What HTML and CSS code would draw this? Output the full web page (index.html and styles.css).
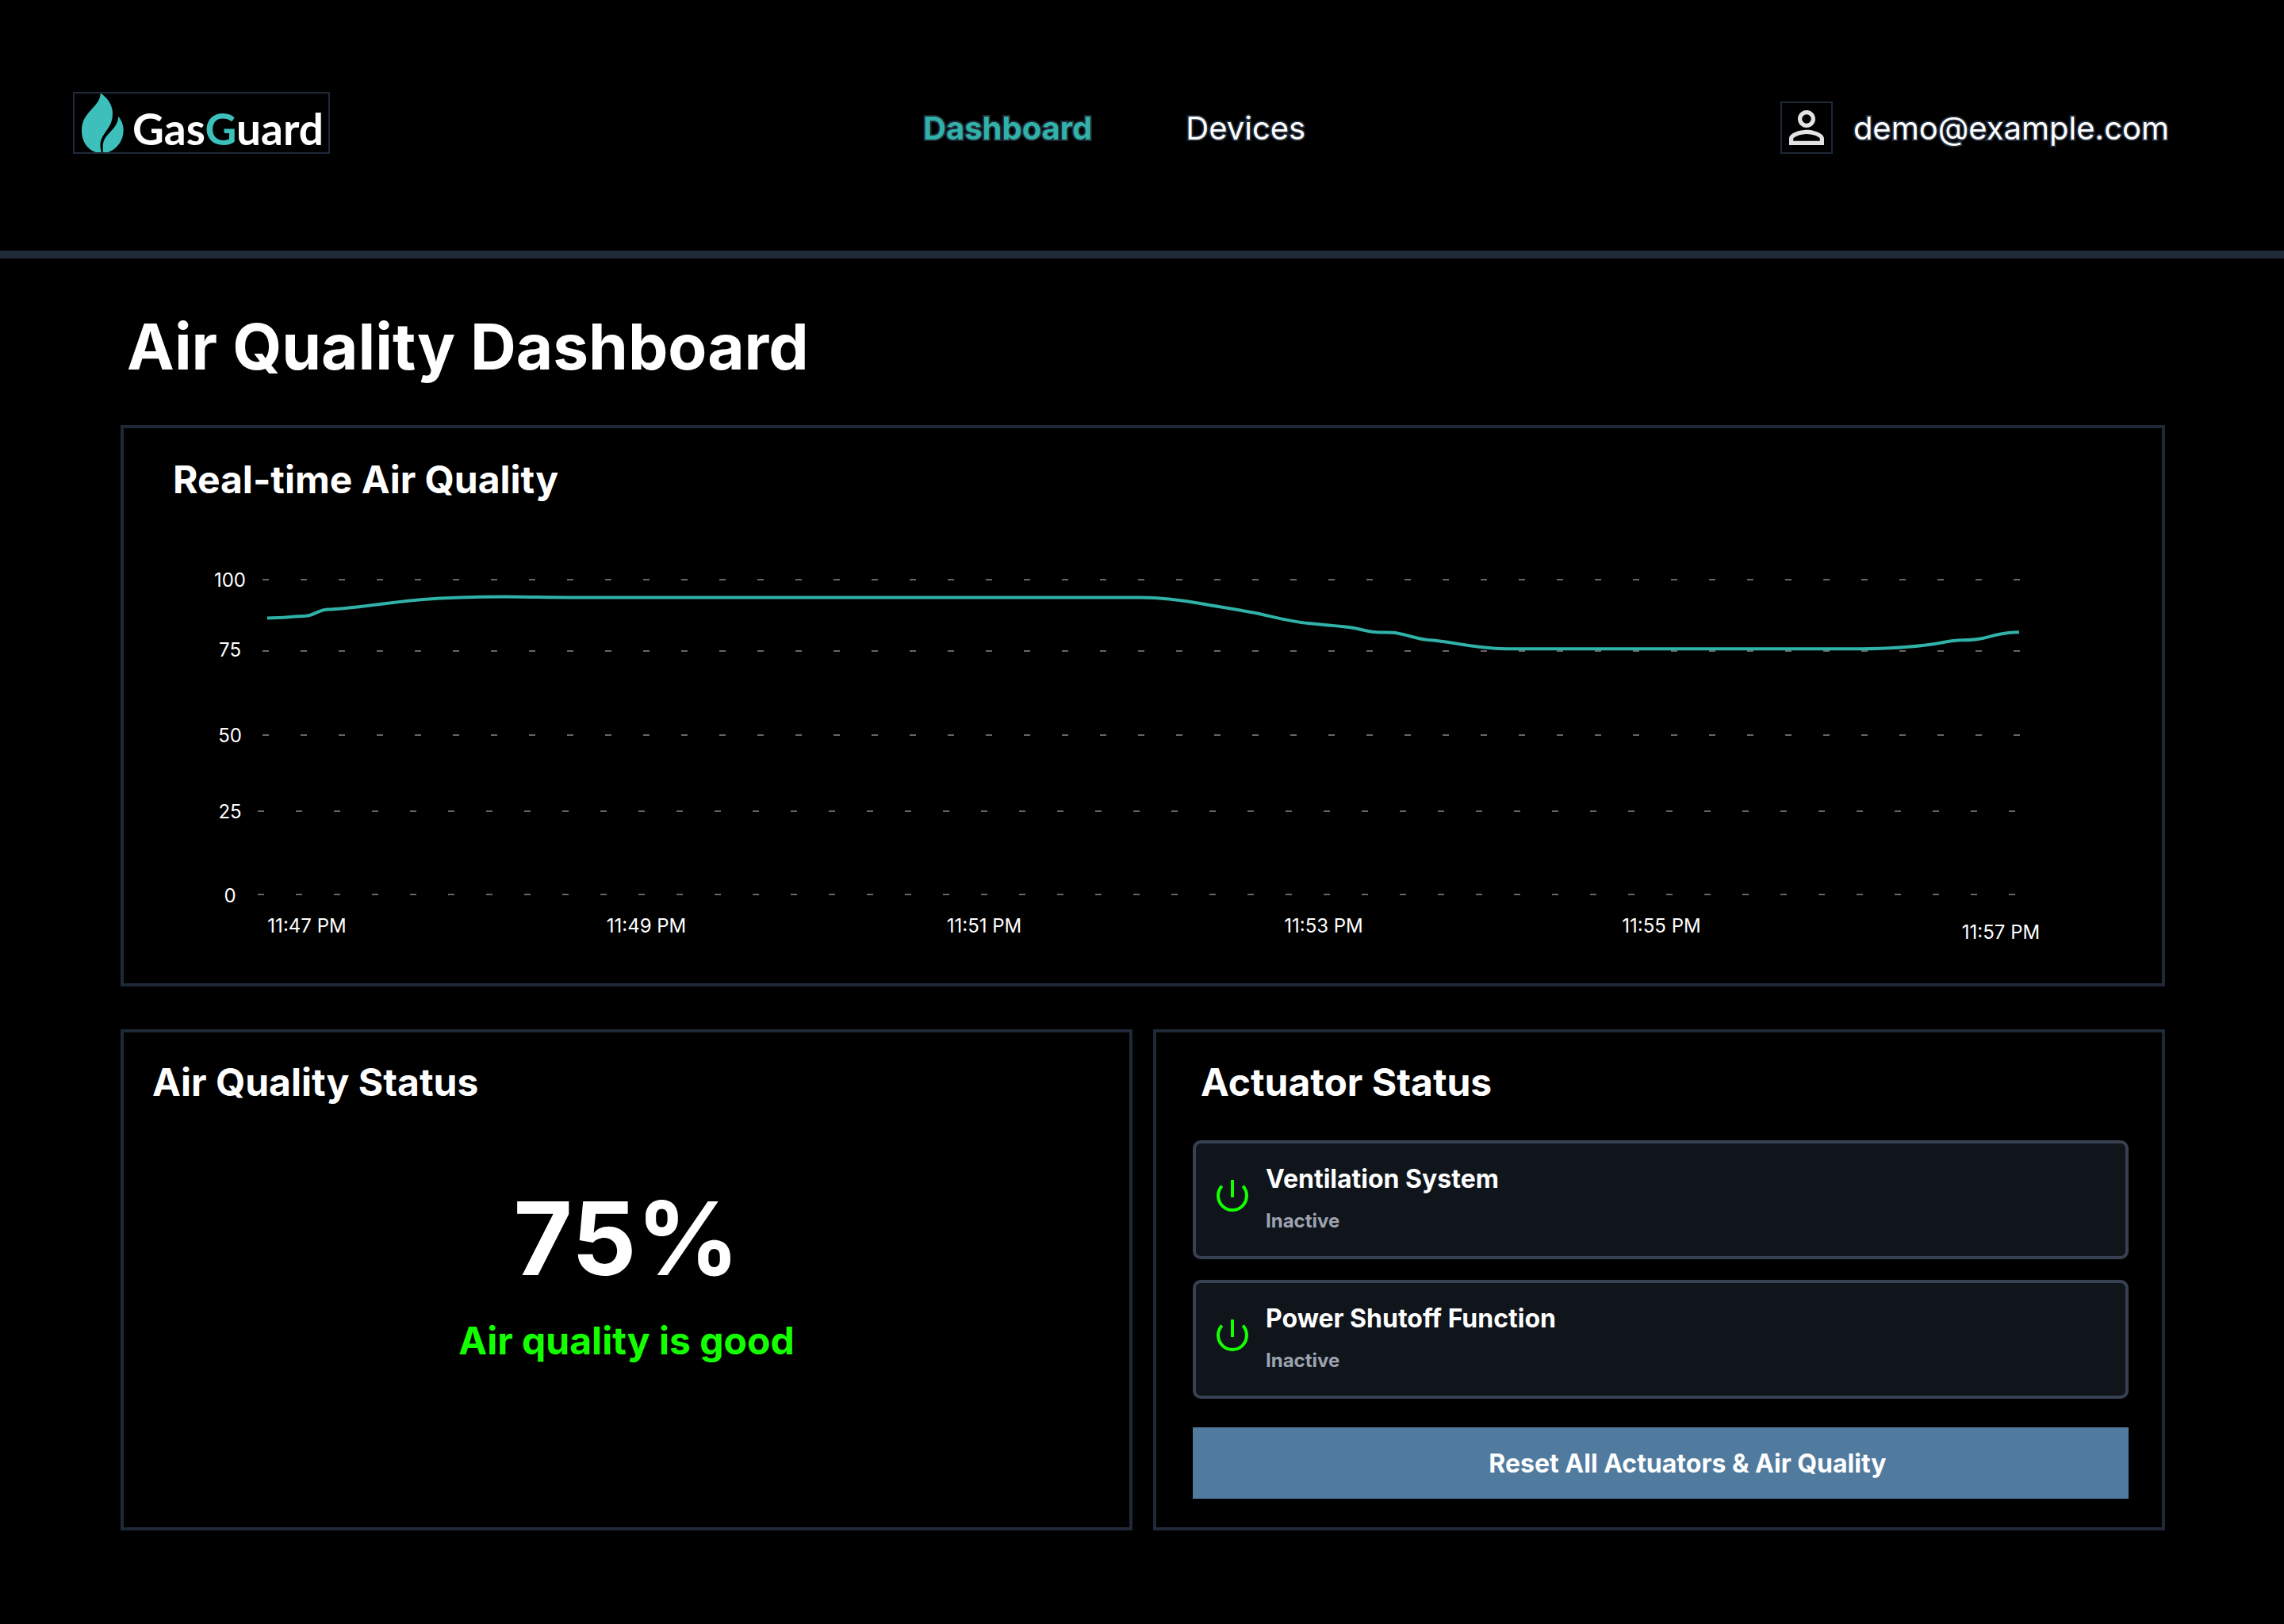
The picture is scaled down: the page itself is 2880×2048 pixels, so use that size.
FILE: index.html
```html
<!DOCTYPE html>
<html lang="en">
<head>
<meta charset="utf-8">
<meta name="viewport" content="width=device-width, initial-scale=1">
<title>GasGuard – Air Quality Dashboard</title>
<link rel="stylesheet" href="styles.css">
</head>
<body>
<header class="topbar">
  <a class="logo" href="#">
    <svg class="logo-mark" viewBox="66 54 165 222" aria-hidden="true">
      <path d="M140 52C160 65 186 92 186 128C186 165 172 180 158 201C143 223 133 242 144 277L126 277C92 268 69 236 69 194C69 160 82 142 100 121C118 100 140 82 140 52Z"/>
      <path d="M208 140C218 153 227 170 227 192C227 235 200 266 166 277L150 277C147 244 150 229 168 209C188 187 206 172 208 140Z"/>
    </svg>
    <span class="logo-text">Gas<span class="logo-accent">G</span>uard</span>
  </a>
  <nav class="nav">
    <a class="nav-link nav-link-active" href="#">Dashboard</a>
    <a class="nav-link" href="#">Devices</a>
  </nav>
  <div class="user">
    <span class="avatar">
      <svg viewBox="0.73 0.73 22.54 22.54" aria-hidden="true">
        <path d="M12 5.9a2.1 2.1 0 1 1 0 4.2 2.1 2.1 0 0 1 0-4.2m0 9c2.970 0 6.100 1.460 6.100 2.100v1.100H5.900V17c0-.64 3.130-2.100 6.100-2.100M12 4C9.790 4 8 5.790 8 8s1.790 4 4 4 4-1.790 4-4-1.790-4-4-4zm0 9c-2.670 0-8 1.340-8 4v3h16v-3c0-2.660-5.330-4-8-4z"/>
      </svg>
    </span>
    <span class="email">demo@example.com</span>
  </div>
</header>

<main class="page">
  <h1 class="page-title">Air Quality Dashboard</h1>

  <section class="card chart-card">
    <h2 class="card-title">Real-time Air Quality</h2>
    <svg class="chart" viewBox="0 0 2570 540" role="img" aria-label="Air quality from 11:47 PM to 11:57 PM">
      <g class="grid">
        <line x1="175" y1="31" x2="2391" y2="31"/>
        <line x1="175" y1="121" x2="2391" y2="121"/>
        <line x1="175" y1="227" x2="2391" y2="227"/>
        <line x1="169" y1="323" x2="2385" y2="323"/>
        <line x1="169" y1="428" x2="2385" y2="428"/>
      </g>
      <g class="axis">
        <text x="134" y="40">100</text>
        <text x="134" y="128">75</text>
        <text x="134" y="236">50</text>
        <text x="134" y="332">25</text>
        <text x="134" y="438">0</text>
      </g>
      <g class="axis">
        <text x="231" y="476">11:47 PM</text>
        <text x="659" y="476">11:49 PM</text>
        <text x="1085" y="476">11:51 PM</text>
        <text x="1513" y="476">11:53 PM</text>
        <text x="1939" y="476">11:55 PM</text>
        <text x="2367" y="484">11:57 PM</text>
      </g>
      <path class="series" d="M181 79.500C200 79.500 212 77.500 229 76.800C240 76 245 69.500 257 68.600C290 67.500 330 60 374 56.300C410 53.500 450 52.200 500 52.700C530 53 560 53.500 600 53.500H1283C1310 53.500 1335 57 1359 61.300C1380 65 1400 68 1423 72.300C1443 76 1470 84 1494 86C1515 88.500 1535 89 1550 91.800C1562 94 1570 97 1580 97.300C1590 98 1598 97 1606 98.500C1620 101 1632 106 1645 107C1655 107.500 1665 109 1680 111.500C1700 115 1725 118 1744 118.300H2190C2225 118 2255 116 2280 112.500C2297 110 2304 107.300 2318 107.300C2330 107.300 2337 106.500 2346 104.500C2359 101 2372 97.300 2390 97.300"/>
    </svg>
  </section>

  <div class="row">
    <section class="card status-card">
      <h2 class="card-title">Air Quality Status</h2>
      <p class="status-value">75%</p>
      <p class="status-text">Air quality is good</p>
    </section>

    <section class="card actuator-card">
      <h2 class="card-title">Actuator Status</h2>
      <ul class="actuators">
        <li class="actuator">
          <svg class="power" viewBox="0 0 40 48" aria-hidden="true"><path d="M20 0V22M6.800 7.700A18 18 0 1 0 33.200 7.700"/></svg>
          <div class="actuator-info">
            <h3 class="actuator-name">Ventilation System</h3>
            <p class="actuator-state">Inactive</p>
          </div>
        </li>
        <li class="actuator">
          <svg class="power" viewBox="0 0 40 48" aria-hidden="true"><path d="M20 0V22M6.800 7.700A18 18 0 1 0 33.200 7.700"/></svg>
          <div class="actuator-info">
            <h3 class="actuator-name">Power Shutoff Function</h3>
            <p class="actuator-state">Inactive</p>
          </div>
        </li>
      </ul>
      <button class="reset" type="button">Reset All Actuators &amp; Air Quality</button>
    </section>
  </div>
</main>
</body>
</html>
```
FILE: styles.css
```css
:root {
  --line: #1f2937;
  --teal: #30b2a8;
  --green: #14ff00;
}

* {
  box-sizing: border-box;
  margin: 0;
  padding: 0;
}

body {
  background: #000;
  color: #fff;
  font-family: Inter, "Liberation Sans", sans-serif;
}

.topbar {
  display: grid;
  grid-template-columns: 64fr auto 65fr;
  align-items: end;
  padding: 116px 145px 122px 92px;
  border-bottom: 10px solid var(--line);
}

.logo {
  justify-self: start;
  display: flex;
  align-items: center;
  gap: 10px;
  width: 324px;
  height: 78px;
  padding-left: 8px;
  border: 2px solid var(--line);
  color: #fff;
  text-decoration: none;
}

.logo-mark {
  width: 55px;
  height: 74px;
  fill: #3dc0bc;
}

.logo-text {
  padding-top: 14px;
  font: 700 55px/58px Lato, sans-serif;
}

.logo-accent {
  color: #3dc0bc;
}

.nav {
  display: flex;
  gap: 118px;
}

.nav-link,
.email {
  color: #fff;
  font-size: 40px;
  line-height: 64px;
  text-decoration: none;
  -webkit-text-stroke: 4px var(--line);
  paint-order: stroke fill;
}

.nav-link-active {
  color: var(--teal);
  font-weight: 700;
}

.user {
  justify-self: end;
  display: flex;
  align-items: end;
  gap: 26px;
}

.avatar {
  width: 66px;
  height: 66px;
  border: 2px solid var(--line);
}

.avatar svg {
  display: block;
  width: 100%;
  height: 100%;
  fill: #e3e3e3;
}

.page {
  padding: 62px 150px 118px 152px;
}

.page-title {
  padding-left: 8px;
  margin-bottom: 50px;
  font-size: 80px;
  font-weight: 700;
  line-height: 98px;
}

.card {
  border: 4px solid var(--line);
}

.card-title {
  font-size: 48px;
  font-weight: 700;
  line-height: 60px;
}

.chart-card {
  padding-top: 35px;
  margin-bottom: 54px;
}

.chart-card .card-title {
  padding-left: 62px;
  margin-bottom: 65px;
}

.chart {
  display: block;
  width: 100%;
}

.grid line {
  stroke: #666;
  stroke-width: 2;
  stroke-dasharray: 8 40;
}

.axis text {
  fill: #fff;
  font-size: 24px;
  text-anchor: middle;
}

.series {
  fill: none;
  stroke: var(--teal);
  stroke-width: 4;
}

.row {
  display: grid;
  grid-template-columns: 1fr 1fr;
  gap: 26px;
}

.status-card {
  padding: 33px 36px;
}

.status-value {
  margin-top: 103px;
  font-size: 128px;
  font-weight: 700;
  line-height: 128px;
  text-align: center;
}

.status-text {
  margin-top: 35px;
  color: var(--green);
  font-size: 48px;
  font-weight: 700;
  line-height: 60px;
  text-align: center;
}

.actuator-card {
  padding: 33px 42px 36px 46px;
}

.actuator-card .card-title {
  padding-left: 10px;
}

.actuators {
  display: grid;
  gap: 26px;
  margin: 43px 0 36px;
  list-style: none;
}

.actuator {
  display: flex;
  align-items: center;
  gap: 22px;
  padding: 25px 26px 28px;
  border: 4px solid #374151;
  border-radius: 10px;
  background: #10151c;
}

.power {
  width: 40px;
  height: 48px;
  fill: none;
  stroke: var(--green);
  stroke-width: 4;
}

.actuator-info {
  display: grid;
  gap: 17px;
}

.actuator-name {
  font-size: 32px;
  font-weight: 700;
  line-height: 40px;
}

.actuator-state {
  color: #9ca3af;
  font-size: 24px;
  font-weight: 700;
  line-height: 32px;
}

.reset {
  display: block;
  width: 100%;
  padding: 26px 0 24px 68px;
  border: 0;
  background: #507b9f;
  color: #fff;
  font: 700 32px/40px Inter, "Liberation Sans", sans-serif;
  text-align: center;
  cursor: pointer;
}
```
